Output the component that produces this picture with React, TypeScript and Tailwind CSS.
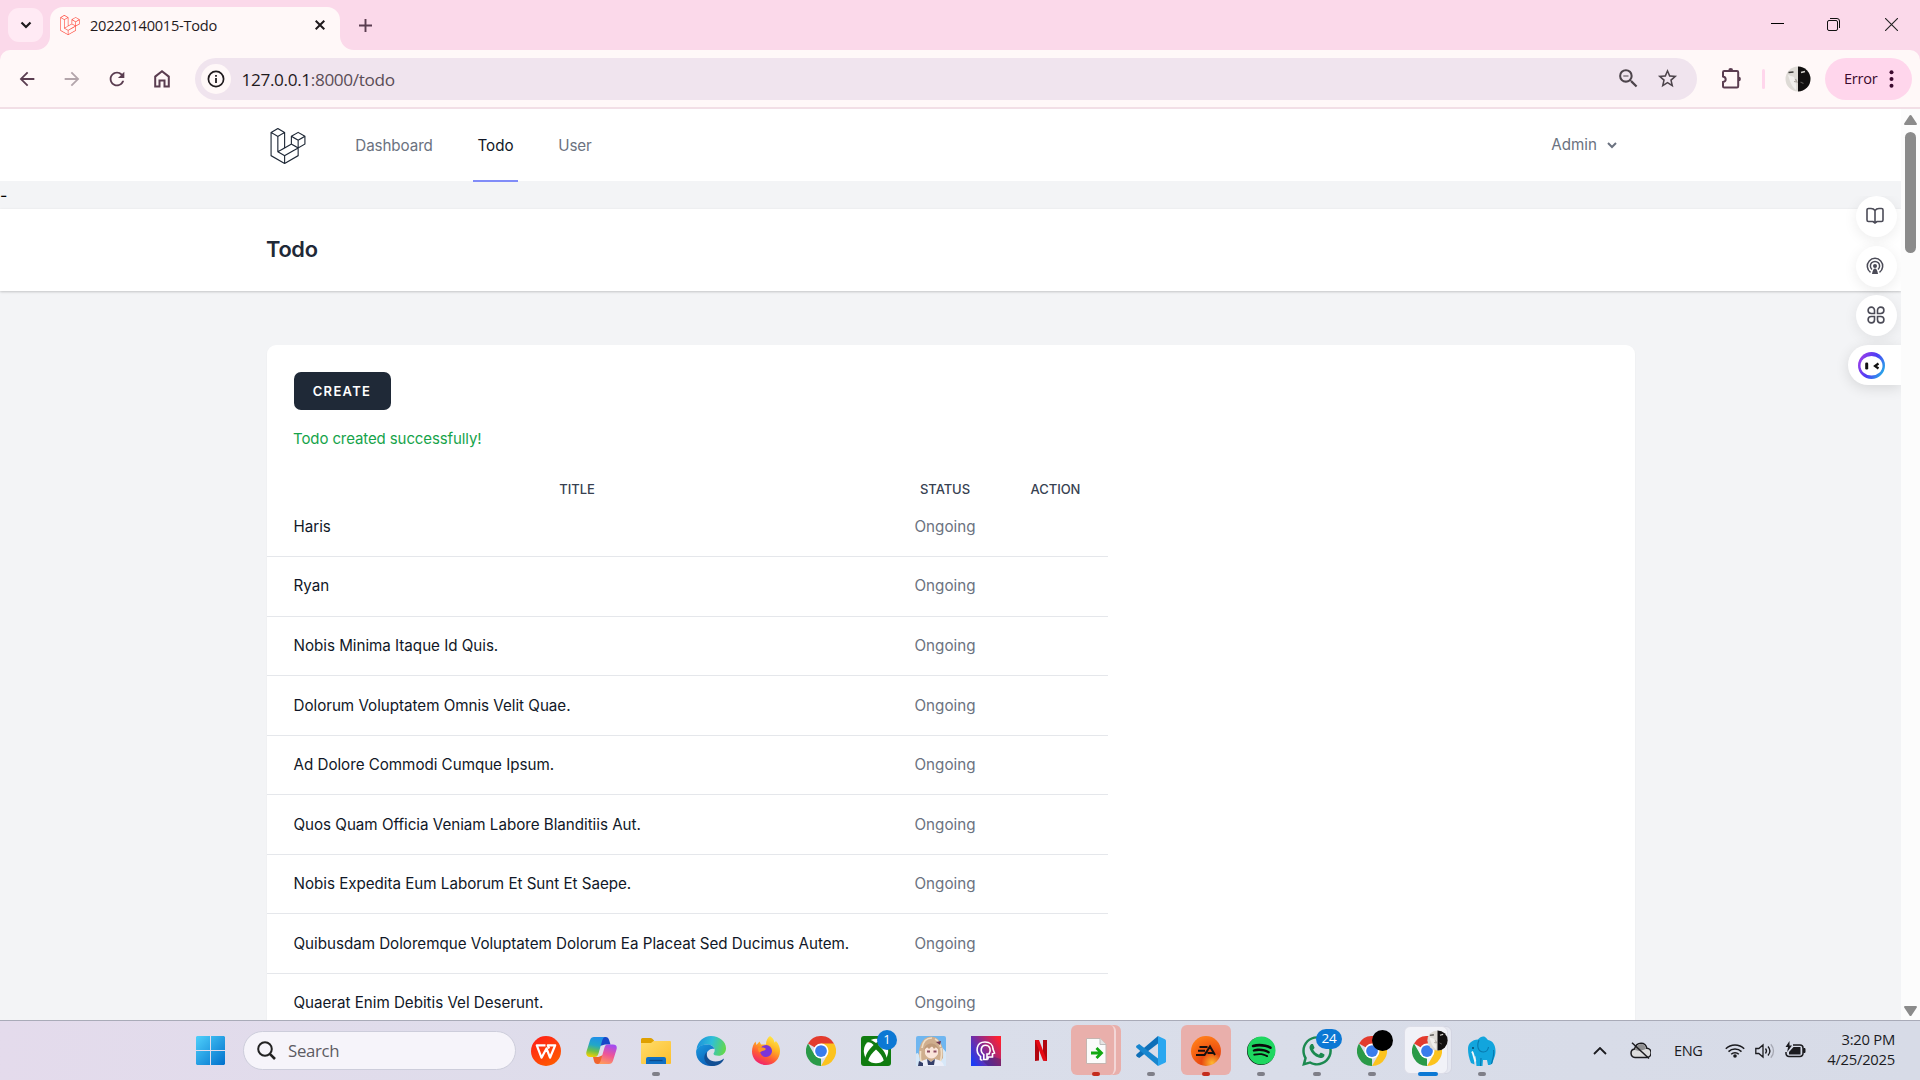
import React from "react";
import { SiLaravel } from "react-icons/si";
import {
  MdArrowBack,
  MdArrowForward,
  MdRefresh,
  MdZoomOut,
  MdStarOutline,
} from "react-icons/md";
import { FaSpotify, FaWhatsapp } from "react-icons/fa";

const todos = [
  "Haris",
  "Ryan",
  "Nobis Minima Itaque Id Quis.",
  "Dolorum Voluptatem Omnis Velit Quae.",
  "Ad Dolore Commodi Cumque Ipsum.",
  "Quos Quam Officia Veniam Labore Blanditiis Aut.",
  "Nobis Expedita Eum Laborum Et Sunt Et Saepe.",
  "Quibusdam Doloremque Voluptatem Dolorum Ea Placeat Sed Ducimus Autem.",
  "Quaerat Enim Debitis Vel Deserunt.",
];

/* ---------- browser chrome ---------- */

function TabStrip() {
  return (
    <div className="flex h-[50px] shrink-0 items-end bg-[#fbd9ea]">
      <div className="mb-2 ml-2 flex h-[34px] w-[35px] items-center justify-center rounded-[11px] bg-[#ffeaf4]">
        <svg width="12" height="8" viewBox="0 0 12 8" fill="none" stroke="#1f1a1d" strokeWidth="2.2">
          <path d="M1.500 1.500 6 6l4.500-4.500" />
        </svg>
      </div>
      <svg className="-mr-px ml-[-7px] shrink-0" width="15" height="14" viewBox="0 0 15 14" fill="#fff8f8">
        <path d="M0 14A14 14 0 0 0 14 0h1v14z" />
      </svg>
      <div className="flex h-[43px] w-[290px] items-center rounded-t-[13px] bg-[#fff8f8] pb-[7px] pl-[10px] pr-[13px]">
        <SiLaravel className="size-[20px] text-[#ff4b3e]" />
        <span className="ml-[10px] -mt-px font-['Open_Sans',sans-serif] text-[14.6px] leading-5 tracking-[-0.25px] whitespace-nowrap text-[#1f1a1d]">
          20220140015-Todo
        </span>
        <svg className="ml-auto mr-[2px]" width="10" height="10" viewBox="0 0 10 10" stroke="#1f1a1d" strokeWidth="2">
          <path d="M.7.7l8.600 8.600M9.300.7.7 9.300" />
        </svg>
      </div>
      <svg className="-ml-px shrink-0" width="15" height="14" viewBox="0 0 15 14" fill="#fff8f8">
        <path d="M15 14A14 14 0 0 1 1 0H0v14z" />
      </svg>
      <svg className="mb-[18px] ml-[5px]" width="13" height="13" viewBox="0 0 13 13" stroke="#5a3d50" strokeWidth="1.9">
        <path d="M6.500 0v13M0 6.500h13" />
      </svg>
      <div className="mb-[19px] ml-auto mr-[22px] flex items-center text-[#1f1a1d]">
        <svg width="13" height="13" viewBox="0 0 13 13" stroke="#000">
          <path d="M0 5.500h13" />
        </svg>
        <svg className="ml-[43px]" width="13" height="13" viewBox="0 0 13 13" fill="none" stroke="#111">
          <rect x=".5" y="2.5" width="10" height="10" rx="1.5" />
          <path d="M3 .5h7a2.500 2.500 0 0 1 2.500 2.500v7" />
        </svg>
        <svg className="ml-[45px]" width="13" height="13" viewBox="0 0 13 13" stroke="#222" strokeWidth="1.1">
          <path d="M0 0l13 13M13 0 0 13" />
        </svg>
      </div>
    </div>
  );
}

function FaceAvatar({ className, size }: { className?: string; size: number }) {
  return (
    <svg className={className} width={size} height={size} viewBox="0 0 26 26">
      <circle cx="13" cy="13" r="12.500" fill="#dedbd6" />
      <path d="M3 9c2 6 3 11 8 15 1-5-1-9-2-13z" fill="#f1efec" />
      <path d="M13 .5a12.500 12.500 0 0 1 0 25z" fill="#121010" />
      <path d="M3.500 6.500l5-.5" stroke="#3c3a38" strokeWidth="1.500" />
      <path d="M10.500 13l1.500 3-3-.5" stroke="#a9a39d" strokeWidth="1.200" fill="none" />
      <path d="M16 6.500l4-1" stroke="#d8d5d0" strokeWidth="1.500" />
      <path d="M15.500 16l3 1.500" stroke="#5a5654" strokeWidth="1.200" />
    </svg>
  );
}

function Toolbar() {
  return (
    <div className="h-[59px] shrink-0 bg-[#fbd9ea]">
      <div className="flex h-[59px] items-center rounded-t-[10px] border-b-2 border-[#f2dfe6] bg-[#fff8f8]">
        <div className="ml-[16px] flex items-center gap-[23px] text-[#5a3d50]">
          <MdArrowBack className="size-[22px]" />
          <MdArrowForward className="size-[22px] text-[#b3a5ab]" />
          <MdRefresh className="size-[22px]" />
          <svg width="22" height="22" viewBox="0 0 22 22" fill="none" stroke="currentColor" strokeWidth="2">
            <path d="M4.200 18.600V8.600L11 3.200l6.800 5.400v10h-4.300v-6h-5v6z" />
          </svg>
        </div>
        <div className="ml-[22px] flex h-[42px] w-[1502px] items-center rounded-full bg-[#f0e4ee] pl-[6px]">
          <div className="flex size-[30px] items-center justify-center rounded-full bg-[#fff8f8]">
            <svg width="18" height="18" viewBox="0 0 18 18" fill="none" stroke="#1f1a1d">
              <circle cx="9" cy="9" r="7.6" strokeWidth="1.7" />
              <path d="M9 8v5M9 5v1.700" strokeWidth="1.8" />
            </svg>
          </div>
          <span className="ml-[10.5px] mt-[2px] font-['Open_Sans',sans-serif] text-[17.2px] tracking-[-0.36px] whitespace-nowrap text-[#5b4d57]">
            <span className="text-[#1f1a1d]">127.0.0.1</span>:8000/todo
          </span>
          <MdZoomOut className="ml-auto size-[25px] text-[#4d444b]" />
          <MdStarOutline className="ml-[15px] mr-[18px] size-[23px] text-[#4d444b]" />
        </div>
        <svg className="ml-[23px]" width="23" height="23" viewBox="0 0 23 23" fill="none" stroke="#5a3d50" strokeWidth="2">
          <path d="M3 5.200a1.200 1.200 0 0 1 1.200-1.200H17a1.200 1.200 0 0 1 1.200 1.200V19.200a1.200 1.200 0 0 1-1.200 1.200H4.200A1.200 1.200 0 0 1 3 19.200v-4.100c3.600-.6 3.600-5 0-5.700z" />
          <path d="M8.300 3.500a2.400 2.400 0 0 1 4.800 0zM18.700 9.800a2.200 2.200 0 0 1 0 4.400z" fill="#5a3d50" stroke="none" />
        </svg>
        <div className="ml-[19px] h-[20px] w-[3px] rounded-full bg-[#ffd6ec]" />
        <FaceAvatar className="ml-[20px]" size={26} />
        <div className="ml-[14px] flex h-[42px] w-[87px] items-center rounded-full bg-[#ffd6ec] pl-[19px]">
          <span className="font-['Open_Sans',sans-serif] text-[14.6px] tracking-[-0.25px] text-[#3b0a2e]">Error</span>
          <svg className="ml-auto mr-[18px]" width="5" height="18" viewBox="0 0 5 18" fill="#3b0a2e">
            <circle cx="2.5" cy="2.3" r="2" />
            <circle cx="2.5" cy="9" r="2" />
            <circle cx="2.5" cy="15.7" r="2" />
          </svg>
        </div>
      </div>
    </div>
  );
}

/* ---------- page ---------- */

function Nav() {
  return (
    <nav className="flex h-[73px] shrink-0 border-b border-[#f3f4f6] bg-white pl-[267px] pr-[266px]">
      <div className="flex h-[73px] w-[44px] items-center pl-[3px]">
        <SiLaravel className="size-[36px] text-[#1f2937]" />
      </div>
      <div className="ml-[40px] flex h-[73px] gap-[36px] font-['Inter',sans-serif] text-[15.2px] text-[#6b7280]">
        <a className="flex w-[86px] items-center justify-center border-b-2 border-transparent pt-[3px] tracking-[-0.1px]">Dashboard</a>
        <a className="flex w-[45px] items-center justify-center border-b-2 border-[#818cf8] pt-[3px] text-[#111827]">Todo</a>
        <a className="flex w-[42px] items-center justify-center border-b-2 border-transparent pt-[3px] tracking-[-0.1px]">User</a>
      </div>
      <div className="ml-auto flex h-[73px] items-center font-['Inter',sans-serif] text-[15.2px] text-[#6b7280]">
        Admin
        <svg className="ml-[10px] mr-[18px]" width="10" height="7" viewBox="0 0 10 7" fill="none" stroke="#6b7280" strokeWidth="2">
          <path d="M1 1l4 4 4-4" />
        </svg>
      </div>
    </nav>
  );
}

function TodoTable() {
  return (
    <div className="w-[841px]">
      <div className="flex h-[18px] items-center pt-[2px] text-center text-[13px] font-medium tracking-[-0.05px] text-[#374151]">
        <div className="w-[620px]">TITLE</div>
        <div className="w-[116px]">STATUS</div>
        <div className="w-[105px]">ACTION</div>
      </div>
      {todos.map((title) => (
        <div key={title} className="flex h-[59.55px] items-center border-b border-[#e5e7eb] pt-[1px] text-[15.2px]">
          <div className="w-[620px] pl-[26.5px] tracking-[-0.03px] whitespace-nowrap text-[#111827]">{title}</div>
          <div className="w-[116px] text-center text-[#6b7280]">Ongoing</div>
          <div className="w-[105px]" />
        </div>
      ))}
    </div>
  );
}

function FloatingTools() {
  const circle =
    "flex size-[41px] items-center justify-center rounded-full bg-white shadow-[0_3px_14px_rgba(0,0,0,0.08)]";
  return (
    <div className="absolute right-0 top-[87px] flex w-[70px] flex-col items-end overflow-hidden pb-5 text-[#4b4b57]">
      <div className={circle + " mr-[4px]"}>
        <svg className="mb-[2px] mr-[3px]" width="18" height="18" viewBox="0 0 18 18" fill="none" stroke="currentColor" strokeWidth="1.6">
          <path d="M9 3.500C8 2 6.500 1.500 5 1.500H2.500A1.500 1.500 0 0 0 1 3v10a1.500 1.500 0 0 0 1.500 1.500H7L9 16l2-1.500h4.500A1.500 1.500 0 0 0 17 13V3a1.500 1.500 0 0 0-1.500-1.500H13c-1.500 0-3 .5-4 2zM9 3.500V17" />
        </svg>
      </div>
      <div className={circle + " mr-[4px] mt-[9px]"}>
        <svg className="mb-[2px] mr-[3px]" width="18" height="18" viewBox="0 0 18 18" fill="none" stroke="currentColor" strokeWidth="1.5">
          <path d="M4.500 15.300a7.700 7.700 0 1 1 9 0M6 12.500a4.600 4.600 0 1 1 6 0" />
          <circle cx="9" cy="9" r="2" fill="currentColor" stroke="none" />
          <path d="M9 11.500c1.500 0 2.500 2 3 5.500H6c.5-3.500 1.500-5.500 3-5.500z" fill="currentColor" stroke="none" />
        </svg>
      </div>
      <div className={circle + " mr-[4px] mt-[8px]"}>
        <svg className="mb-[1px] mr-[1px]" width="18" height="18" viewBox="0 0 18 18" fill="none" stroke="currentColor" strokeWidth="1.6">
          <path d="M7.500 7.500V4.300A3.200 3.200 0 1 0 4.300 7.500zM10.500 7.500V4.300a3.200 3.200 0 1 1 3.200 3.200zM7.500 10.500v3.200a3.200 3.200 0 1 1-3.200-3.200zM10.500 10.500v3.200a3.200 3.200 0 1 0 3.200-3.200z" />
        </svg>
      </div>
      <div className="mt-[9px] flex h-[40px] w-[53px] items-center rounded-l-full bg-white pl-[10px] shadow-[0_3px_14px_rgba(0,0,0,0.12)]">
        <svg width="27" height="27" viewBox="0 0 27 27">
          <defs>
            <linearGradient id="bot" x1="0" y1=".3" x2="1" y2=".8">
              <stop offset="0" stopColor="#9a3ee8" />
              <stop offset=".5" stopColor="#4b3df5" />
              <stop offset="1" stopColor="#22b8e6" />
            </linearGradient>
          </defs>
          <circle cx="13.5" cy="13.5" r="13.5" fill="url(#bot)" />
          <ellipse cx="13.5" cy="13.8" rx="11" ry="9.8" fill="#fff" />
          <rect x="7.2" y="10.5" width="3" height="7" rx="1.3" fill="#111" />
          <path d="M20.500 11.500 17 14l3.500 2.500" fill="none" stroke="#111" strokeWidth="2.2" />
        </svg>
      </div>
    </div>
  );
}

function Page() {
  return (
    <div className="flex h-[911px] shrink-0 overflow-hidden">
      <div className="relative flex h-full w-[1901px] flex-col overflow-hidden bg-[#f3f4f6] font-['Inter',sans-serif]">
        <Nav />
        <div className="h-[27px] shrink-0 text-[16px] leading-[27px] text-black">-</div>
        <header className="flex h-[82px] shrink-0 items-center bg-white pb-[2px] pl-[266px] shadow-[0_1px_3px_rgba(0,0,0,0.1),0_1px_2px_rgba(0,0,0,0.1)]">
          <h2 className="text-[21.8px] font-semibold tracking-[-0.3px] text-[#1f2937]">Todo</h2>
        </header>
        <main className="ml-[267px] mt-[54px] h-[900px] w-[1368px] shrink-0 rounded-[9px] bg-white pt-[27px] shadow-[0_1px_2px_rgba(0,0,0,0.05)]">
          <div className="pl-[27px]">
            <button className="flex h-[38px] w-[97px] items-center justify-center rounded-[7px] bg-[#1f2937] pt-px pr-px text-[13px] font-semibold tracking-[1.3px] text-white">
              CREATE
            </button>
            <p className="-ml-px mt-[17px] h-[23px] text-[15px] leading-[23px] tracking-[-0.1px] text-[#16a34a]">
              Todo created successfully!
            </p>
          </div>
          <div className="mt-[29.5px]">
            <TodoTable />
          </div>
        </main>
        <FloatingTools />
      </div>
      <div className="flex w-[19px] flex-col items-center bg-[#fcfcfc] pt-[6px] pb-[4px]">
        <svg width="13" height="10" viewBox="0 0 13 10" fill="#8b8b8b">
          <path d="M6.500 0c.5 0 .8.300 1 .600L12.800 8.500c.4.800 0 1.500-.8 1.500H1C.2 10-.2 9.300.2 8.500L5.500.6c.2-.3.500-.6 1-.6z" />
        </svg>
        <div className="mt-[7px] h-[121px] w-[11px] rounded-full bg-[#8b8b8b]" />
        <svg className="mt-auto" width="13" height="10" viewBox="0 0 13 10" fill="#8b8b8b">
          <path d="M6.500 10c.5 0 .8-.3 1-.6l5.300-7.900c.4-.8 0-1.500-.8-1.500H1C.2 0-.2.700.2 1.500l5.300 7.900c.2.300.5.600 1 .600z" />
        </svg>
      </div>
    </div>
  );
}

/* ---------- taskbar ---------- */

function ChromeIcon() {
  return (
    <svg width="30" height="30" viewBox="0 0 48 48">
      <path d="M24 24 3.200 12A24 24 0 0 1 44.800 12z" fill="#e33b2e" />
      <path d="M3.200 12 13.600 30l10.400 6L24 48A24 24 0 0 1 3.200 12z" fill="#2a9a48" />
      <path d="M34.400 30 24 48A24 24 0 0 0 44.800 12H24z" fill="#fcc31e" />
      <circle cx="24" cy="24" r="12" fill="#fff" />
      <circle cx="24" cy="24" r="9.4" fill="#3a7cec" />
    </svg>
  );
}

function WpsIcon() {
  return (
    <svg width="30" height="30" viewBox="0 0 30 30">
      <defs>
        <linearGradient id="wps" x1="0" y1="0" x2=".7" y2="1">
          <stop offset="0" stopColor="#ff1a1a" />
          <stop offset="1" stopColor="#ff5a00" />
        </linearGradient>
      </defs>
      <circle cx="15" cy="15" r="15" fill="url(#wps)" />
      <path d="M14.500 9.300H5.800l4.700 12.400 5-9.200 3.500 9.200 5.200-12.400h-7.400l1.300 3.200" fill="none" stroke="#fff" strokeWidth="2.2" strokeLinejoin="round" />
    </svg>
  );
}

function CopilotIcon() {
  return (
    <svg width="31" height="29" viewBox="0 0 31 29">
      <defs>
        <linearGradient id="cpa" x1=".5" y1="0" x2=".3" y2="1">
          <stop offset="0" stopColor="#1f8fe8" />
          <stop offset=".4" stopColor="#22a7c8" />
          <stop offset=".7" stopColor="#6cc04a" />
          <stop offset="1" stopColor="#f5d000" />
        </linearGradient>
        <linearGradient id="cpb" x1=".6" y1="0" x2=".3" y2="1">
          <stop offset="0" stopColor="#a44cf0" />
          <stop offset=".5" stopColor="#ef5596" />
          <stop offset="1" stopColor="#ff9a5c" />
        </linearGradient>
      </defs>
      <path d="M15 1h4.500c2 0 3 1.200 3.600 3l1.400 4.500h-5.500L14 10z" fill="#1747c8" />
      <path d="M8 1h11c-1.500.5-2.200 1.700-2.700 3.300L12.500 17.500c-.7 2.400-1.800 3.500-4 3.500H4c-3 0-4.400-2.300-3.500-5.500L4 4.200C4.800 2 6 1 8 1z" fill="url(#cpa)" />
      <path d="M16 28h-4.500c-2 0-3-1.200-3.500-3l-1-4h5.500L17 19z" fill="#f0642d" />
      <path d="M23 28H12c1.500-.5 2.200-1.700 2.700-3.300L18.500 11.500C19.200 9.100 20.300 8.500 22.500 8.500H27c3 0 4.400 1.800 3.500 5L27 24.800C26.200 27 25 28 23 28z" fill="url(#cpb)" />
    </svg>
  );
}

function ExplorerIcon() {
  return (
    <svg width="30" height="26" viewBox="0 0 30 26">
      <defs>
        <linearGradient id="fld" x1="0" y1="0" x2="1" y2="1">
          <stop offset="0" stopColor="#ffdc6b" />
          <stop offset="1" stopColor="#fcbf2c" />
        </linearGradient>
      </defs>
      <path d="M0 1.500A1.500 1.500 0 0 1 1.500 0H9.500c.8 0 1.300.2 1.800.7L13 2.500V8H0z" fill="#dfa000" />
      <path d="M0 5h10l2.500-2H29a1 1 0 0 1 1 1v21a1 1 0 0 1-1 1H1a1 1 0 0 1-1-1z" fill="url(#fld)" />
      <path d="M5 26v-5a2 2 0 0 1 2-2h16a2 2 0 0 1 2 2v5z" fill="#1070c4" />
      <path d="M8.500 22.500h13" stroke="#0b4a8c" strokeWidth="1.3" />
    </svg>
  );
}

function EdgeIcon() {
  return (
    <svg width="30" height="30" viewBox="0 0 30 30">
      <defs>
        <linearGradient id="edt" x1="0" y1=".3" x2="1" y2=".5">
          <stop offset="0" stopColor="#1c8fdc" />
          <stop offset=".5" stopColor="#2fbfd8" />
          <stop offset="1" stopColor="#62d84c" />
        </linearGradient>
        <linearGradient id="edl" x1="0" y1="0" x2=".6" y2="1">
          <stop offset="0" stopColor="#1a9be0" />
          <stop offset="1" stopColor="#0c5fb8" />
        </linearGradient>
      </defs>
      <path d="M.5 13.500C1.500 5.500 7.500 0 15 0c8.500 0 15 5.800 15 12.200 0 4.800-3.500 7.600-7.500 7.600-3.500 0-5-1-5-2 0-.8 1.200-1.500 1.200-3.800 0-2.600-2.600-5.500-7.200-5.500C6 8.500 2 11 .5 13.500z" fill="url(#edt)" />
      <path d="M.2 14.500C1.500 10.500 6 8.500 11 8.500c4 0 6.800 2 7.500 4.500-4-1.500-8 2-8 6 0 5 3.500 9 9 10.200-2 .6-3.400.8-4.500.8C6 30-.8 23 .2 14.500z" fill="url(#edl)" />
      <path d="M11 16c-1.500 5.500 3 9.500 8.500 9.500 3.500 0 6-1.300 8.500-3-.5 3-5 7.500-11 7.500C10 30 5 21 11 16z" fill="#124f94" />
    </svg>
  );
}

function FirefoxIcon() {
  return (
    <svg width="28" height="29" viewBox="0 0 28 29">
      <defs>
        <linearGradient id="ffx" x1=".8" y1="0" x2=".3" y2="1">
          <stop offset="0" stopColor="#fff04a" />
          <stop offset=".4" stopColor="#ffae22" />
          <stop offset=".7" stopColor="#ff5a36" />
          <stop offset="1" stopColor="#ef1f72" />
        </linearGradient>
      </defs>
      <path d="M18 0c3 2 4 4 4.500 6.500 1-.3 1.200-1 1.200-1.700C27 8 28 12 28 15c0 8-6 14-14 14S0 23 0 15.500C0 11 1.500 8 3.500 5.500L4.500 9l3-3.500L9 8.500h5c0-4 1.500-6.500 4-8.500z" fill="url(#ffx)" />
      <circle cx="14" cy="15" r="6" fill="#7a35d8" />
      <path d="M6 12c3-1.500 6-.5 8 1-1 1.800-3.500 1.700-5.500 3-2 1-2.500-2-2.500-4z" fill="#ff9426" />
    </svg>
  );
}

function XboxIcon() {
  return (
    <svg width="30" height="30" viewBox="0 0 30 30">
      <rect width="30" height="30" rx="3" fill="#107c10" />
      <circle cx="15" cy="15" r="12.2" fill="#fff" />
      <path d="M6 3.500c3.500-.5 7 1.800 9 3.600 2-1.800 5.500-4.100 9-3.600v3c-2.500-.8-5 .8-6.600 2.500 4.600 4.500 8.600 9.500 8.100 14.500l-2.300 2.300C22 20.500 18.500 16.500 15 13.500c-3.500 3-7 7-8.200 12.300l-2.300-2.300C4 18.500 8 13.500 12.600 9 11 7.300 8.500 5.700 6 6.500z" fill="#107c10" />
    </svg>
  );
}

function AnimeIcon() {
  return (
    <svg width="30" height="30" viewBox="0 0 30 30">
      <rect width="30" height="30" rx="2" fill="#6fb6f0" />
      <path d="M0 18c2-3 4 0 4 12H0zM25 10l5 6v14h-5z" fill="#d7e8f8" />
      <path d="M3 20C2 10 7 .5 15 .5S28 9 27 22l-4 5H6z" fill="#cfae8e" />
      <path d="M6 12C7 5 11 2 16 2M4.500 15c0 5-1 8 1 11M25 12c1 5 1 9-1 14M19 3c4 2 5 5 5.500 8" stroke="#f0dec6" strokeWidth="1.700" fill="none" />
      <path d="M9 13c2-3 11-3 13 0v5c-2 3-4 4.500-6.500 4.500S10.500 21 9 18z" fill="#fae5da" />
      <path d="M8 14C9 6 20 5 23 14l-3-3-2 2-2-3-3 3-2-2z" fill="#bf9b7b" />
      <path d="M11 15.500h3M17.500 15.500h3" stroke="#8a4a60" strokeWidth="1.800" />
      <path d="M20 6l5-1-1 4z" fill="#6b3350" />
      <path d="M2 30c1-4 5-6 9-7l4 3 4-3c5 1 8 3 9 7z" fill="#eceff9" />
      <path d="M11 23l4 3 4-3-1 6h-6zM3 25l4 2v3H2z" fill="#35406a" />
    </svg>
  );
}

function HeadIcon() {
  return (
    <svg width="30" height="30" viewBox="0 0 30 30">
      <defs>
        <linearGradient id="hdi" x1="0" y1=".8" x2="1" y2=".2">
          <stop offset="0" stopColor="#1a3cf5" />
          <stop offset=".5" stopColor="#8a2a90" />
          <stop offset="1" stopColor="#ff2030" />
        </linearGradient>
      </defs>
      <rect width="30" height="30" fill="url(#hdi)" />
      <path d="M12 25 9 24l14-3 7 2v7H17z" fill="#2b2370" opacity=".4" />
      <g fill="none" stroke="#fff" strokeWidth="1.6">
        <path d="M9.500 24v-3.500C4 16 5 6 14 6c5 0 8 3 8 7l1.500 4-2 .8V21H17v2.500" />
        <path d="M11.500 24H9.500M12.800 23.500v-4.800C8.500 15.500 10 9.200 14.500 9.200c4.500 0 6 5 3.500 8.800h-2v5.500z" />
      </g>
    </svg>
  );
}

function NetflixIcon() {
  return (
    <svg width="12" height="21" viewBox="0 0 12 21">
      <path d="M0 0h4v20.500L0 21zM8 0h4v21l-4-.5z" fill="#b1060f" />
      <path d="M0 0h4l8 21-4-.5z" fill="#e50914" />
    </svg>
  );
}

function FileIcon() {
  return (
    <svg width="21" height="26" viewBox="0 0 21 26">
      <path d="M.5.5H14l6 6v19H.5z" fill="#fbfbfb" stroke="#c5b5b0" />
      <path d="M14 .5v6h6" fill="#e4e4e4" stroke="#bbb" />
      <path d="M5 15h10M10.500 10l5 5-5 5" fill="none" stroke="#12a812" strokeWidth="2.8" />
    </svg>
  );
}

function CodeIcon() {
  return (
    <svg width="30" height="30" viewBox="0 0 30 30">
      <path d="M22 0v7.500L3.200 22 .8 20.500c-1-.8-1-1.600 0-2.500z" fill="#0e6fb8" />
      <path d="M22 30v-7.500L3.200 8 .8 9.500c-1 .8-1 1.600 0 2.500z" fill="#1786cf" />
      <path d="M22 0l7 3.200c.6.300 1 .9 1 1.600v20.400c0 .7-.4 1.300-1 1.600L22 30z" fill="#2aa7f0" />
    </svg>
  );
}

function EaIcon() {
  return (
    <svg width="30" height="30" viewBox="0 0 30 30">
      <defs>
        <radialGradient id="eag" cx=".7" cy=".9" r=".9">
          <stop offset="0" stopColor="#ffb830" />
          <stop offset=".4" stopColor="#e84810" />
          <stop offset="1" stopColor="#ff7a18" />
        </radialGradient>
      </defs>
      <circle cx="15" cy="15" r="15" fill="url(#eag)" />
      <path d="M8.500 11h8M7 14.800h7M5 19h8.500l5.500-8.500 5 8.500M16.500 17h6" fill="none" stroke="#16100e" strokeWidth="2" />
    </svg>
  );
}

function ElephantIcon() {
  return (
    <svg width="28" height="30" viewBox="0 0 28 30">
      <path d="M0 13C0 7 4 4 10 3.500 12 1 15 0 17 1c1.500.8 2 2 3 3 5 1 7.500 5 7.500 11 0 5-1.500 7-2.500 10-.5 2-1 3.500-3.500 4L20 29l-1-5h-4l-.5 6H8.500L7.500 20c-1.500 1-1.500 5-1 8.500L3 27C1 22 0 18 0 13z" fill="#12a5dd" />
      <path d="M11 4C8.500 10 10 16 15.500 16c3 0 4.500-2 5-5M25.500 14c1 5-1 9-2 14M13 22l-.5 8" fill="none" stroke="#0879ae" strokeWidth="1.1" />
      <path d="M4 15.500c2 3 1.500 6 3.500 10" fill="none" stroke="#f3f7fa" strokeWidth="1.900" />
      <circle cx="5" cy="12" r=".9" fill="#063b5c" />
    </svg>
  );
}

function TaskSlot({
  children,
  mark,
  tile,
}: {
  children: React.ReactNode;
  mark?: "gray" | "red" | "blue";
  tile?: "red" | "redStack" | "white";
}) {
  return (
    <div className="relative flex h-[59px] w-[55px] items-center justify-center">
      {tile === "red" && <div className="absolute left-[2px] top-[4px] h-[50px] w-[50px] rounded-[6px] bg-[#e9afab]" />}
      {tile === "redStack" && (
        <>
          <div className="absolute left-[30px] top-[4px] h-[50px] w-[22px] rounded-[6px] bg-[#e9afab]" />
          <div className="absolute left-[2px] top-[4px] h-[50px] w-[45px] rounded-[6px] border-r-2 border-[#f3d6d6] bg-[#e9afab]" />
        </>
      )}
      {tile === "white" && (
        <>
          <div className="absolute left-[30px] top-[5px] h-[48px] w-[22px] rounded-[6px] border border-[#d3d5e2] bg-[#e6e8f1]" />
          <div className="absolute left-[4px] top-[5px] h-[48px] w-[44px] rounded-[6px] border border-[#dcdde8] bg-[#f1f2f8]" />
        </>
      )}
      <div className="relative flex h-[30px] items-center justify-center">{children}</div>
      {mark === "gray" && <div className="absolute bottom-[4px] left-[23px] h-[4px] w-[8px] rounded-full bg-[#7f7f88]" />}
      {mark === "red" && <div className="absolute bottom-[4px] left-[23px] h-[4px] w-[8px] rounded-full bg-[#c42b1c]" />}
      {mark === "blue" && <div className="absolute bottom-[4px] left-[18px] h-[4px] w-[20px] rounded-full bg-[#0c78d4]" />}
    </div>
  );
}

function Taskbar() {
  return (
    <div className="flex h-[60px] shrink-0 items-center border-t border-[#a9abb8] bg-linear-to-r from-[#e4dbec] via-[#dadeea] to-[#d7dbe7] font-['Open_Sans',sans-serif]">
      <svg className="ml-[196px]" width="29" height="29" viewBox="0 0 29 29">
        <defs>
          <linearGradient id="win" x1="0" y1="0" x2="29" y2="29" gradientUnits="userSpaceOnUse">
            <stop offset="0" stopColor="#4fd0fb" />
            <stop offset="1" stopColor="#0070cc" />
          </linearGradient>
        </defs>
        <path d="M1 0h13v14H0V1zM15 0h13l1 1v13H15zM0 15h14v14H1l-1-1zM15 15h14v13l-1 1H15z" fill="url(#win)" />
      </svg>
      <div className="ml-[18px] flex h-[39px] w-[273px] items-center rounded-full border border-[#cdcddb] bg-[#f6f4fa] pl-[13px]">
        <svg width="19" height="19" viewBox="0 0 19 19" fill="none" stroke="#222" strokeWidth="2">
          <circle cx="8" cy="8" r="6.8" />
          <path d="M12.800 12.800 18 18" strokeWidth="2.6" />
        </svg>
        <span className="ml-[12px] text-[16.8px] tracking-[-0.3px] text-[#5d5b62]">Search</span>
      </div>
      <div className="ml-[2.5px] flex">
        <TaskSlot><WpsIcon /></TaskSlot>
        <TaskSlot><CopilotIcon /></TaskSlot>
        <TaskSlot mark="gray"><ExplorerIcon /></TaskSlot>
        <TaskSlot><EdgeIcon /></TaskSlot>
        <TaskSlot><FirefoxIcon /></TaskSlot>
        <TaskSlot><ChromeIcon /></TaskSlot>
        <TaskSlot>
          <XboxIcon />
          <div className="absolute -top-[6px] left-[16px] flex size-[20px] items-center justify-center rounded-full bg-[#0c78d4] text-[13px] text-white">1</div>
        </TaskSlot>
        <TaskSlot><AnimeIcon /></TaskSlot>
        <TaskSlot><HeadIcon /></TaskSlot>
        <TaskSlot><NetflixIcon /></TaskSlot>
        <TaskSlot tile="redStack" mark="red"><FileIcon /></TaskSlot>
        <TaskSlot mark="gray"><CodeIcon /></TaskSlot>
        <TaskSlot tile="red" mark="red"><EaIcon /></TaskSlot>
        <TaskSlot mark="gray">
          <div className="flex size-[28px] items-center justify-center rounded-full bg-[#0b0b0b]">
            <FaSpotify className="size-[29px] shrink-0 text-[#1ed760]" />
          </div>
        </TaskSlot>
        <div className="ml-px flex">
          <TaskSlot mark="gray">
            <FaWhatsapp className="size-[34px] text-[#1c8a50]" />
            <div className="absolute -top-[7px] left-[16px] flex h-[20px] w-[26px] items-center justify-center rounded-full bg-[#0c78d4] text-[13.5px] tracking-[-0.3px] text-white">24</div>
          </TaskSlot>
          <TaskSlot mark="gray">
            <ChromeIcon />
            <div className="absolute -top-[6px] left-[15px] size-[21px] rounded-full bg-black" />
          </TaskSlot>
          <TaskSlot tile="white" mark="blue">
            <ChromeIcon />
            <FaceAvatar className="absolute -top-[6px] left-[15px]" size={21} />
          </TaskSlot>
          <TaskSlot mark="gray"><ElephantIcon /></TaskSlot>
        </div>
      </div>
      <div className="ml-auto flex items-center pr-[25px] text-[#1b1b1f]">
        <svg width="14" height="8" viewBox="0 0 14 8" fill="none" stroke="currentColor" strokeWidth="1.8">
          <path d="M1 7l6-6 6 6" />
        </svg>
        <svg className="ml-[23px]" width="21" height="17" viewBox="0 0 21 17" fill="none">
          <path d="M5 15.500a4.300 4.300 0 0 1-.5-8.500C5.500 3.500 8 1.200 11 1.200s5.200 2 5.800 5A4.500 4.500 0 0 1 16 15.500z" fill="#dcdcdc" stroke="#1b1b1f" strokeWidth="1.5" />
          <path d="M5 8c1-4 3-6 6-6 2.500 0 4.500 2 5 5l-3 1-4 1z" fill="#8e8e90" />
          <path d="M2 .8 19 16.500" stroke="#1b1b1f" strokeWidth="1.5" />
        </svg>
        <span className="ml-[23px] w-[29px] text-[14.6px] tracking-[-0.4px]">ENG</span>
        <svg className="ml-[22px]" width="20" height="15" viewBox="0 0 20 15" fill="none" stroke="currentColor" strokeWidth="1.5">
          <path d="M.8 5.800a13 13 0 0 1 18.400 0M3.500 8.600a9.200 9.200 0 0 1 13 0M6.200 11.300a5.400 5.400 0 0 1 7.600 0" />
          <circle cx="10" cy="13" r="1.8" fill="currentColor" stroke="none" />
        </svg>
        <svg className="ml-[10px]" width="20" height="16" viewBox="0 0 20 16" fill="none" stroke="currentColor" strokeWidth="1.3">
          <path d="M.8 5.500v5h3L8 14V2L3.800 5.500zM10.500 5.500c1.200 1.500 1.200 3.500 0 5M13 3.500c2.300 2.700 2.300 6.300 0 9" />
          <path d="M15.800 1.300c3.600 4 3.600 9.400 0 13.400" stroke="#a6a8b3" />
        </svg>
        <svg className="ml-[10px] mb-[2px]" width="21" height="17" viewBox="0 0 21 17" fill="none">
          <path d="M8 4H15a3 3 0 0 1 3 3v5.500a3 3 0 0 1-3 3H4a3 3 0 0 1-3-3V11" stroke="#1b1b1f" strokeWidth="1.5" />
          <path d="M8.500 6h7v7.500H4v-2.500z" fill="#1b1b1f" />
          <path d="M18.500 7.500H20v4h-1.500z" fill="#1b1b1f" stroke="#1b1b1f" />
          <path d="M4.500 0 .5 6H3l-.8 5L7 4.500H4.500z" fill="#1b1b1f" />
        </svg>
        <div className="ml-[19px] w-[70px] text-right text-[14.8px] leading-[20px] tracking-[-0.25px] whitespace-nowrap">
          <div className="-mt-[3px]">3:20 PM</div>
          <div className="-ml-[3px]">4/25/2025</div>
        </div>
      </div>
    </div>
  );
}

export default function App() {
  return (
    <div className="flex h-[1080px] w-[1920px] flex-col overflow-hidden bg-white">
      <TabStrip />
      <Toolbar />
      <Page />
      <Taskbar />
    </div>
  );
}
